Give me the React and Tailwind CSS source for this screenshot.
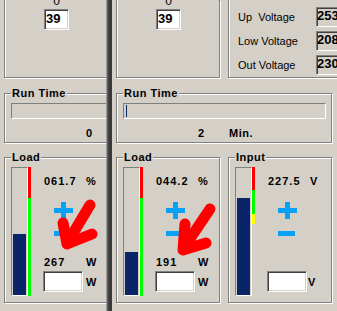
import React from "react";

const sunken =
  "border border-t-[#808080] border-l-[#808080] border-b-white border-r-white shadow-[inset_1px_1px_0_#404040,inset_-1px_-1px_0_#d4d0c8]";

function GroupLabel({ children }) {
  return (
    <span className="absolute left-[6px] top-[-8px] bg-[#d4d0c8] px-[1px] text-[11px] leading-[14px] font-bold tracking-[0.5px] text-black whitespace-nowrap">
      {children}
    </span>
  );
}

function Plus() {
  return (
    <svg width="19" height="17" viewBox="0 0 19 17" className="block ml-[11px] mt-[14px]">
      <rect x="0" y="6" width="19" height="5" fill="#0aa0f5" />
      <rect x="7" y="0" width="5" height="17" fill="#0aa0f5" />
    </svg>
  );
}

function Meter({ label, fill, segs, value, unit, watts, boxUnit, unitGap }) {
  return (
    <div className="relative w-[104px] h-[146px] shrink-0 border border-[#808080] shadow-[inset_1px_1px_0_#ffffff,1px_1px_0_#ffffff]">
      <GroupLabel>{label}</GroupLabel>
      <div className="flex pl-[6px] pt-[9px]">
        <div className="w-[17px] h-[129px] shrink-0 border border-t-[#808080] border-l-[#808080] border-b-white border-r-white px-[1px] pt-[1px] flex flex-col justify-end">
          <div className="bg-[#0a246a]" style={{ height: fill }} />
        </div>
        <div className="w-[3px] h-[129px] shrink-0 flex flex-col">
          {segs.map((s, i) => (
            <div key={i} className={s} />
          ))}
        </div>
        <div className="ml-[12px] flex flex-col text-[11px] leading-[14px] font-bold text-black">
          <div className="mt-[7px] flex h-[14px]">
            <span className="w-[43px] pl-[1px] tracking-[1px]">{value}</span>
            <span>{unit}</span>
          </div>
          <Plus />
          <div className="ml-[11px] mt-[12px] w-[17px] h-[5px] bg-[#0aa0f5]" />
          <div className="mt-[19px] flex h-[14px]">
            {watts && (
              <>
                <span className="w-[43px] pl-[1px] tracking-[1px]">{watts}</span>
                <span>W</span>
              </>
            )}
          </div>
          <div className="mt-[2px] flex items-center">
            <div className={`w-[40px] h-[21px] bg-white ${sunken}`} />
            <span className={unitGap}>{boxUnit}</span>
          </div>
        </div>
      </div>
    </div>
  );
}

const volts = [
  { label: "Up  Voltage", v: "253" },
  { label: "Low Voltage", v: "208" },
  { label: "Out Voltage", v: "230" },
];

function Window({ runValue, tick, load, full }) {
  return (
    <div className="w-[226px] shrink-0 pl-[4px] flex flex-col">
      <div className="flex gap-[8px] h-[78px] shrink-0">
        <div className="w-[104px] h-[78px] shrink-0 border-l border-r border-b border-[#808080] shadow-[inset_1px_0_0_#ffffff,1px_1px_0_#ffffff]">
          <div className="ml-[39px] w-[25px] flex flex-col">
            <div className="-mt-[6px] h-[14px] leading-[14px] text-[12px] text-center">0</div>
            <div className={`mt-[1px] w-[25px] h-[21px] bg-white ${sunken} text-[13px] leading-[17px] font-bold pl-[1px]`}>
              39
            </div>
          </div>
        </div>
        {full && (
          <div className="w-[150px] h-[78px] shrink-0 border-l border-r border-b border-[#808080] shadow-[inset_1px_0_0_#ffffff,1px_1px_0_#ffffff]">
            <div className="pt-[7px] flex flex-col gap-[4px]">
              {volts.map((r) => (
                <div key={r.v} className="flex items-center h-[20px]">
                  <span className="ml-[9px] w-[78px] text-[11px] leading-[14px] whitespace-pre">{r.label}</span>
                  <div className={`w-[40px] h-[20px] bg-[#d4d0c8] ${sunken} text-[13px] leading-[16px] font-bold`}>{r.v}</div>
                </div>
              ))}
            </div>
          </div>
        )}
      </div>

      <div className="relative mt-[15px] w-[216px] h-[50px] shrink-0 border border-[#808080] shadow-[inset_1px_1px_0_#ffffff,1px_1px_0_#ffffff]">
        <GroupLabel>Run Time</GroupLabel>
        <div className="ml-[6px] mt-[9px] w-[203px] h-[16px] border border-t-[#808080] border-l-[#808080] border-b-white border-r-white">
          {tick && <div className="ml-[2px] mt-[1px] w-[1px] h-[12px] bg-[#0a246a]" />}
        </div>
        <div className="mt-[7px] flex h-[14px] text-[11px] leading-[14px] font-bold">
          <span className="w-[87px] text-right">{runValue}</span>
          {full && <span className="ml-[25px] tracking-[0.5px]">Min.</span>}
        </div>
      </div>

      <div className="mt-[14px] flex gap-[8px] shrink-0">
        <Meter
          label="Load"
          fill={load.fill}
          segs={["h-[31px] bg-[#ff0000]", "h-[98px] bg-[#00ff00]"]}
          value={load.pct}
          unit="%"
          watts={load.watts}
          boxUnit="W"
          unitGap="ml-[3px]"
        />
        {full && (
          <Meter
            label="Input"
            fill={97}
            segs={["h-[23px] bg-[#ff0000]", "h-[24px] bg-[#00ff00]", "h-[10px] bg-[#ffff00]"]}
            value="227.5"
            unit="V"
            watts=""
            boxUnit="V"
            unitGap="ml-[1px]"
          />
        )}
      </div>
    </div>
  );
}

export default function App() {
  return (
    <div className="relative w-[337px] h-[311px] overflow-hidden bg-[#d4d0c8] flex font-['Liberation_Sans',Arial,sans-serif] text-black">
      <div className="w-[106px] h-[311px] shrink-0 overflow-hidden">
        <Window runValue="0" tick={false} full={false} load={{ fill: 61, pct: "061.7", watts: "267" }} />
      </div>
      <div className="w-[6px] h-[311px] shrink-0 bg-[linear-gradient(to_right,#b8b5ae_0px,#7c7a76_1px,#4a4a4a_2px,#363636_4px,#3c3c3c_6px)]" />
      <div className="flex-1 h-[311px] overflow-hidden">
        <Window runValue="2" tick={true} full={true} load={{ fill: 43, pct: "044.2", watts: "191" }} />
      </div>
      <svg
        className="absolute inset-0 pointer-events-none"
        width="337"
        height="311"
        viewBox="0 0 337 311"
      >
        <g stroke="#ff0000" strokeWidth="11" strokeLinecap="round" strokeLinejoin="round" fill="none">
          <path d="M90 205 L69 240" />
          <path d="M63 223 L67 244 L92 234" />
          <path d="M210 209 L185 246" />
          <path d="M185 224 L183 250 L206 243" />
        </g>
      </svg>
    </div>
  );
}
